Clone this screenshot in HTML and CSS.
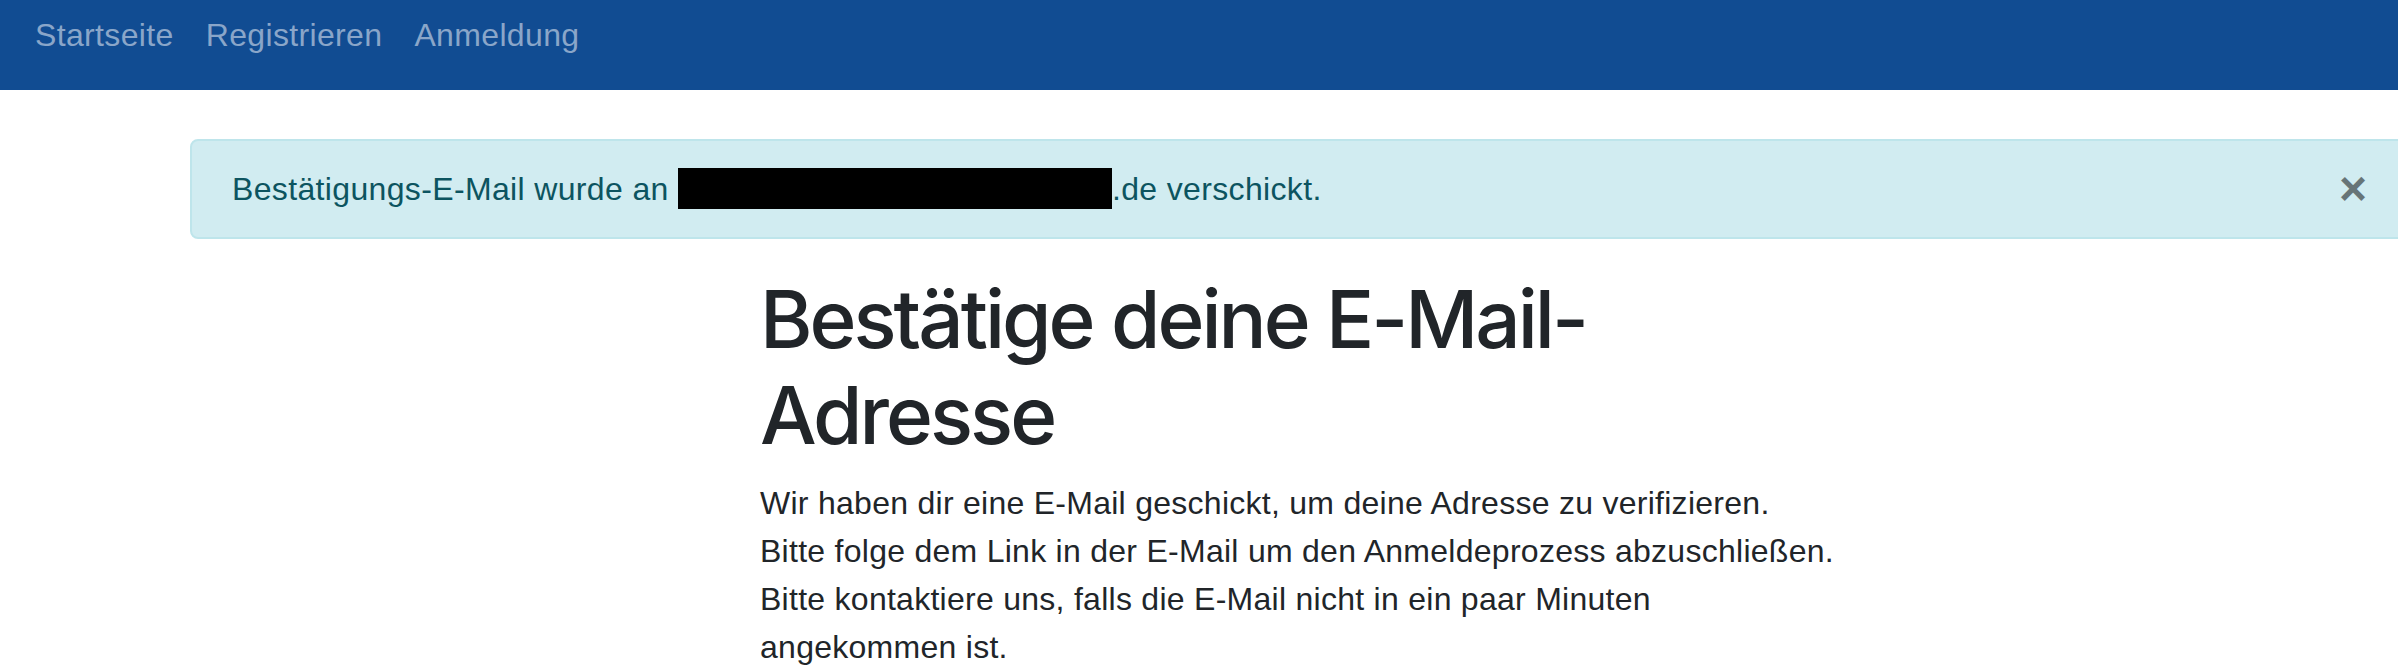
FILE: index.html
```html
<!DOCTYPE html>
<html lang="de">
<head>
<meta charset="utf-8">
<title>Bestätige deine E-Mail-Adresse</title>
<link rel="stylesheet" href="styles.css">
</head>
<body>
<nav class="navbar">
  <a class="nav-link" href="#">Startseite</a>
  <a class="nav-link" href="#">Registrieren</a>
  <a class="nav-link" href="#">Anmeldung</a>
</nav>
<main class="container">
  <div class="alert">
    <span class="alert-text">Bestätigungs-E-Mail wurde an <span class="redacted"></span>.de verschickt.</span>
    <button class="close" type="button" aria-label="Close">&times;</button>
  </div>
  <section class="content">
    <h1 class="title">Bestätige deine E-Mail-Adresse</h1>
    <p class="lead-text">Wir haben dir eine E-Mail geschickt, um deine Adresse zu verifizieren.<br>
    Bitte folge dem Link in der E-Mail um den Anmeldeprozess abzuschließen.<br>
    Bitte kontaktiere uns, falls die E-Mail nicht in ein paar Minuten angekommen ist.</p>
  </section>
</main>
</body>
</html>
```

FILE: styles.css
```css
html, body {
  margin: 0;
  padding: 0;
  overflow: hidden;
}
body {
  font-family: "Liberation Sans", Arial, sans-serif;
  color: #212529;
  background: #fff;
  font-size: 32px;
  line-height: 48px;
  letter-spacing: 0.35px;
}
.navbar {
  height: 90px;
  background: #114c92;
  display: flex;
  align-items: flex-start;
  padding: 11px 0 0 19px;
  box-sizing: border-box;
}
.nav-link {
  color: #8aa6c9;
  text-decoration: none;
  padding: 0 16px;
  line-height: 48px;
}
.container {
  margin-left: 190px;
  width: 2224px;
  padding-top: 49px;
}
.alert {
  position: relative;
  background: #d1ecf1;
  border: 2px solid #bee5eb;
  border-radius: 8px;
  color: #0c5460;
  padding: 24px 128px 24px 40px;
  margin-bottom: 32px;
  line-height: 48px;
}
.redacted {
  display: inline-block;
  width: 434px;
  height: 41px;
  background: #000;
  vertical-align: -9px;
}
.close {
  position: absolute;
  top: 0;
  right: 0;
  padding: 24px 45px;
  background: transparent;
  border: 0;
  font-family: "Liberation Sans", Arial, sans-serif;
  font-size: 48px;
  font-weight: 700;
  line-height: 48px;
  color: #000;
  opacity: .5;
}
.content {
  margin-left: 570px;
  width: 1090px;
}
.title {
  font-family: Inter, "Liberation Sans", sans-serif;
  font-size: 80px;
  line-height: 96px;
  font-weight: 500;
  letter-spacing: -3px;
  margin: 0 0 16px;
}
.lead-text {
  margin: 0;
  letter-spacing: 0.27px;
}
```
